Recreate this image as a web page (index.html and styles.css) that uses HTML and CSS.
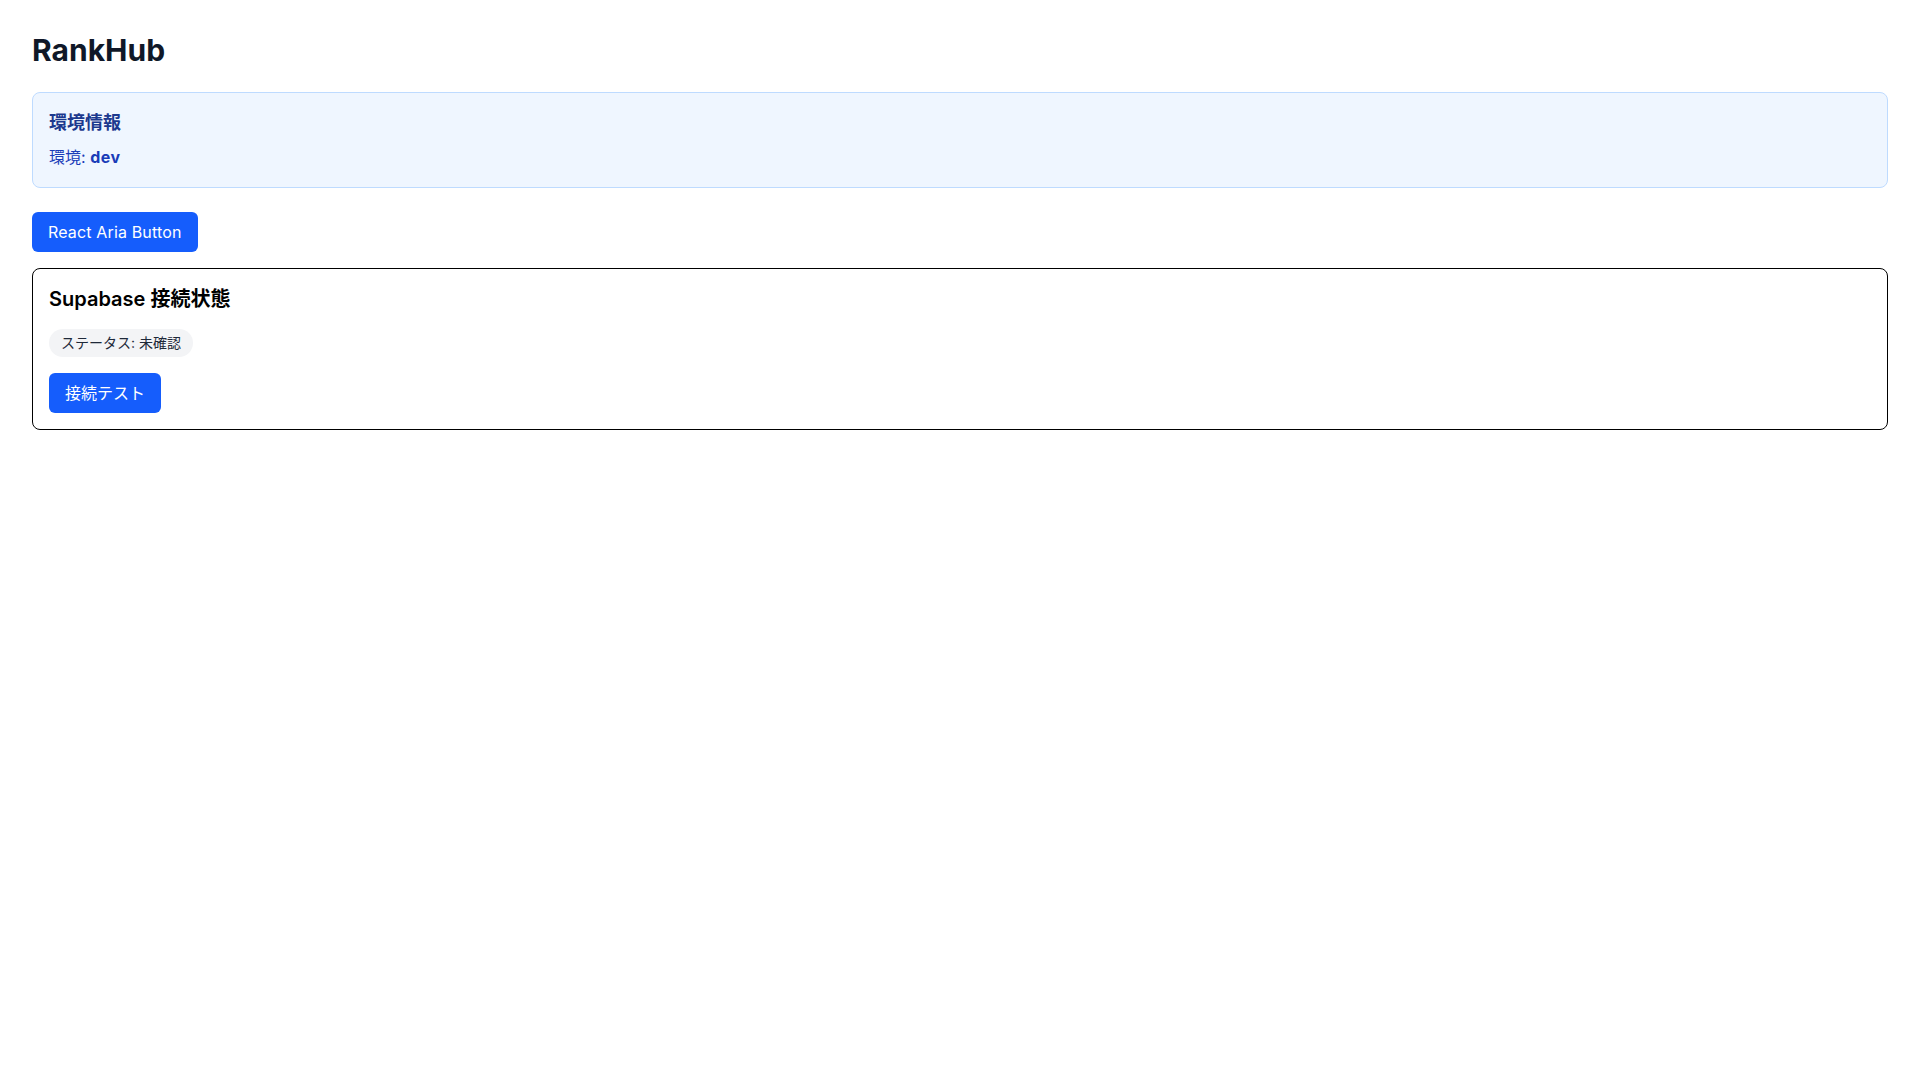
FILE: index.html
```html
<!DOCTYPE html>
<html lang="ja">
<head>
    <meta charset="UTF-8">
    <meta name="viewport" content="width=device-width, initial-scale=1.0">
    <title>RankHub</title>
    <link rel="stylesheet" href="styles.css">
</head>
<body>
    <main class="pagina">
        <h1 class="titulo">RankHub</h1>

        <section class="entorno">
            <h2 class="entorno-titulo">環境情報</h2>
            <p class="entorno-texto">環境: <strong>dev</strong></p>
        </section>

        <button class="boton boton-aria">React Aria Button</button>

        <section class="tarjeta">
            <h2 class="tarjeta-titulo">Supabase 接続状態</h2>
            <span class="estado">ステータス: 未確認</span>
            <button class="boton">接続テスト</button>
        </section>
    </main>
</body>
</html>
```

FILE: styles.css
```css
* {
    box-sizing: border-box;
}
body {
    margin: 0;
    background-color: #ffffff;
    font-family: Inter, "Noto Sans CJK JP", sans-serif;
    color: #000000;
}
.pagina {
    padding: 32px;
    display: flex;
    flex-direction: column;
    align-items: flex-start;
}
.titulo {
    margin: 0 0 24px;
    font-size: 30px;
    line-height: 36px;
    font-weight: 700;
    color: #101828;
}
.entorno {
    align-self: stretch;
    background-color: #eff6ff;
    border: 1px solid #bedbff;
    border-radius: 8px;
    padding: 16px 16px 18px;
    margin-bottom: 24px;
}
.entorno-titulo {
    margin: 0;
    font-size: 18px;
    line-height: 28px;
    font-weight: 600;
    color: #1c398e;
}
.entorno-texto {
    margin: 8px 0 0;
    font-size: 16px;
    line-height: 24px;
    color: #193cb8;
}
.entorno-texto strong {
    font-weight: 700;
    letter-spacing: 0.5px;
}
.boton {
    border: none;
    background-color: #155dfc;
    color: #ffffff;
    font-family: inherit;
    font-size: 16px;
    line-height: 24px;
    padding: 8px 16px;
    border-radius: 6px;
    cursor: pointer;
}
.boton:hover {
    background-color: #1447e6;
}
.boton-aria {
    margin-bottom: 16px;
    letter-spacing: 0.15px;
}
.tarjeta {
    align-self: stretch;
    border: 1px solid #000000;
    border-radius: 8px;
    padding: 16px;
    display: flex;
    flex-direction: column;
    align-items: flex-start;
    gap: 16px;
}
.tarjeta-titulo {
    margin: 0;
    font-size: 20px;
    line-height: 28px;
    font-weight: 600;
}
.estado {
    background-color: #f3f4f6;
    color: #1e2939;
    font-size: 14px;
    line-height: 20px;
    padding: 4px 12px;
    border-radius: 9999px;
}
```
